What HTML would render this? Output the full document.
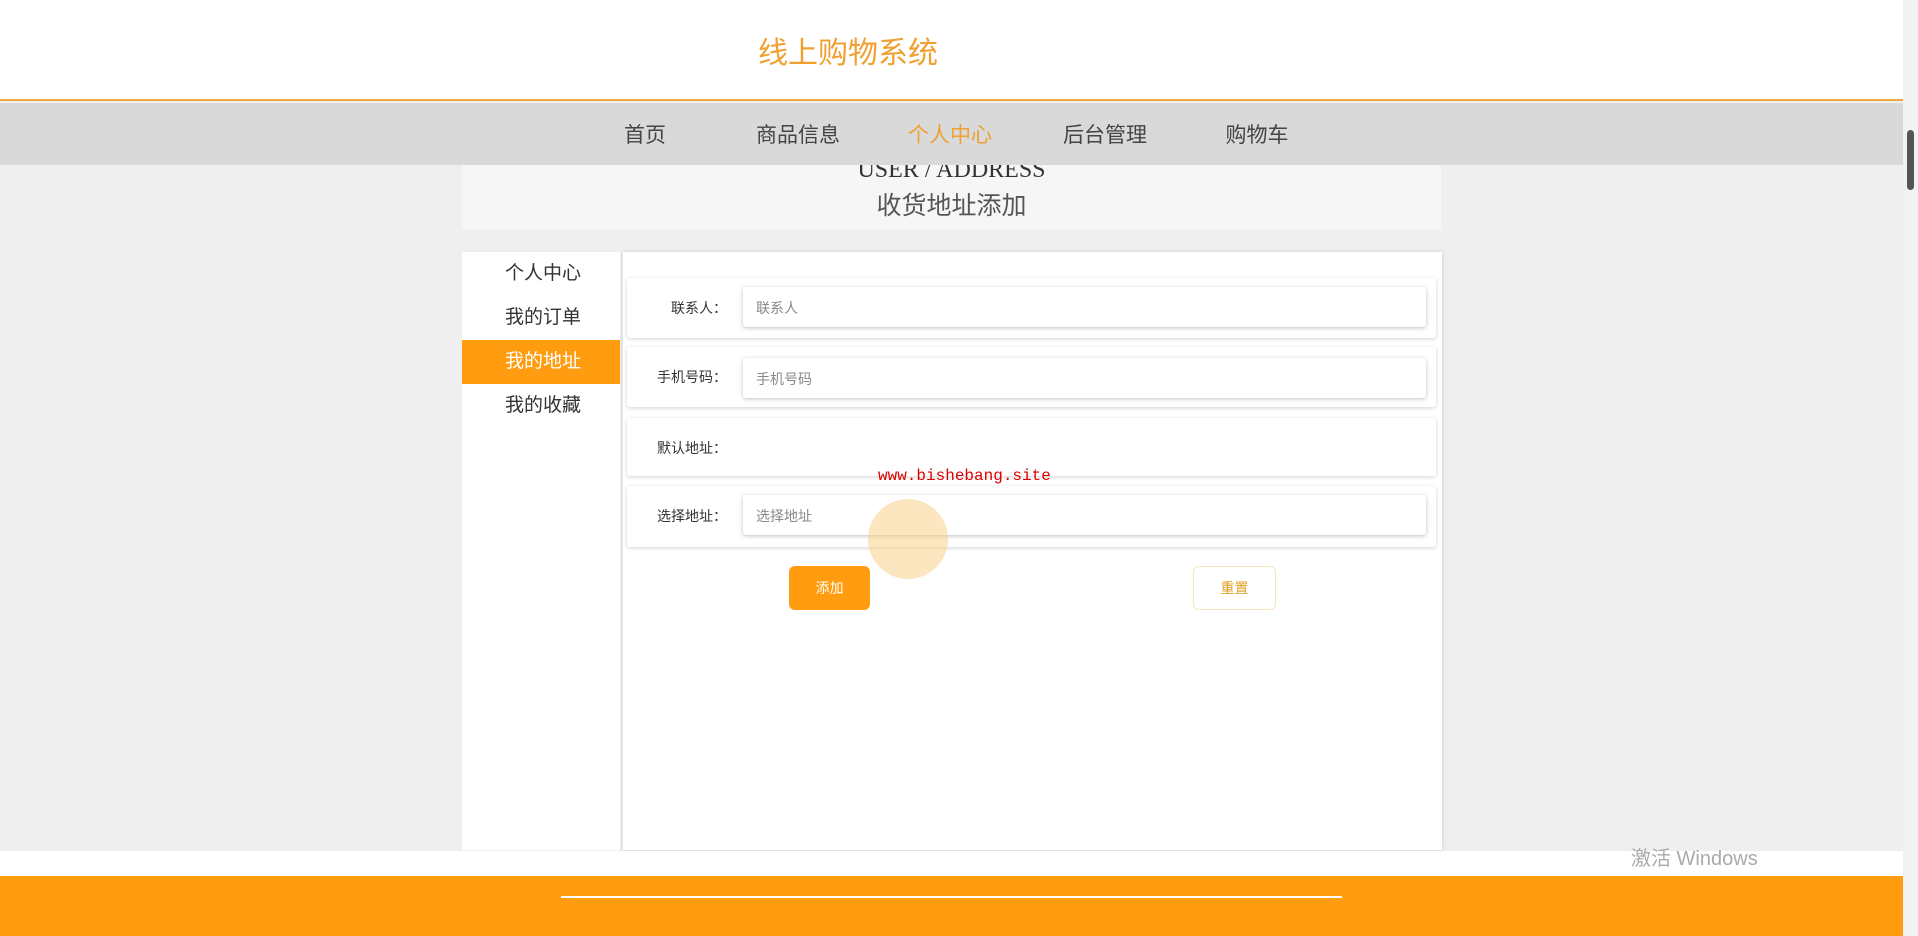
<!DOCTYPE html>
<html><head><meta charset="utf-8"><style>
*{box-sizing:border-box;margin:0;padding:0}
body{width:1918px;height:936px;overflow:hidden;background:#efefef;font-family:"Liberation Sans","Noto Sans CJK SC",sans-serif;position:relative}
.abs{position:absolute}
.top{left:0;top:0;width:1903px;height:101px;background:#fff;border-bottom:2px solid #f0a63a}
.title{left:758px;top:28px;font-size:30px;color:#f0a030}
.nav{left:0;top:103px;width:1903px;height:62px;background:#d9d9d9}
.nav span{position:absolute;top:16px;font-size:21px;color:#444;transform:translateX(-50%)}
.hb{left:462px;top:165px;width:979px;height:65px;background:#f6f6f6}
.side{left:462px;top:252px;width:158px;height:598px;background:#fff}
.side div{height:44px;line-height:44px;font-size:19px;color:#333;padding-left:43px}
.main{left:623px;top:252px;width:819px;height:598px;background:#fff;box-shadow:0 0 4px rgba(0,0,0,.15)}
.row{left:627px;width:809px;background:#fff;box-shadow:0 1px 4px rgba(0,0,0,.18);border-radius:3px}
.lab{position:absolute;right:calc(809px - 100px);font-size:14px;color:#333;white-space:nowrap}
.inp{position:absolute;left:116px;width:683px;height:40px;border-radius:3px;box-shadow:0 1px 4px rgba(0,0,0,.25);font-size:14px;color:#888;padding:11px 13px;background:#fff}
.foot{left:0;top:876px;width:1903px;height:60px;background:#ff9c0f}
.scroll{left:1903px;top:0;width:15px;height:936px;background:#f2f2f2}
</style></head><body>
<div class="abs top"></div>
<div class="abs title">线上购物系统</div>
<div class="abs nav">
<span style="left:645px">首页</span><span style="left:798px">商品信息</span><span style="left:950px;color:#f0a030">个人中心</span><span style="left:1105px">后台管理</span><span style="left:1257px">购物车</span>
</div>
<div class="abs hb"></div>
<div class="abs" style="left:462px;top:157px;width:979px;text-align:center;font-family:'Liberation Serif',serif;font-size:24px;color:#333;clip-path:inset(8px 0 0 0)">USER / ADDRESS</div>
<div class="abs" style="left:462px;top:186px;width:979px;text-align:center;font-size:25px;color:#555">收货地址添加</div>
<div class="abs side">
<div>个人中心</div><div>我的订单</div><div style="background:#ff9c0f;color:#fff">我的地址</div><div>我的收藏</div>
</div>
<div class="abs main"></div>
<div class="abs row" style="top:278px;height:60px"><span class="lab" style="top:20px">联系人：</span><div class="inp" style="top:9px">联系人</div></div>
<div class="abs row" style="top:347px;height:60px"><span class="lab" style="top:20px">手机号码：</span><div class="inp" style="top:11px">手机号码</div></div>
<div class="abs row" style="top:418px;height:58px"><span class="lab" style="top:20px">默认地址：</span></div>
<div class="abs row" style="top:486px;height:61px"><span class="lab" style="top:20px">选择地址：</span><div class="inp" style="top:9px">选择地址</div></div>
<div class="abs" style="left:878px;top:467px;font-family:'Liberation Mono',monospace;font-size:16px;color:#d00">www.bishebang.site</div>
<div class="abs" style="left:868px;top:499px;width:80px;height:80px;border-radius:50%;background:rgba(250,210,140,.55)"></div>
<div class="abs" style="left:789px;top:566px;width:81px;height:44px;background:#ff9c0f;border-radius:6px;color:#fff;font-size:14px;text-align:center;line-height:44px">添加</div>
<div class="abs" style="left:1193px;top:566px;width:83px;height:44px;background:#fff;border:1px solid #f5e6c0;border-radius:6px;color:#e0a020;font-size:14px;text-align:center;line-height:42px">重置</div>
<div class="abs" style="left:0;top:851px;width:1903px;height:25px;background:#fff"></div>
<div class="abs foot"></div>
<div class="abs" style="left:561px;top:896px;width:781px;height:2px;background:#fff"></div>
<div class="abs" style="left:1631px;top:842px;font-size:20px;color:#aaa">激活 Windows</div>
<div class="abs scroll"><div style="position:absolute;left:4px;top:130px;width:7px;height:60px;background:#555;border-radius:4px"></div></div>
</body></html>
